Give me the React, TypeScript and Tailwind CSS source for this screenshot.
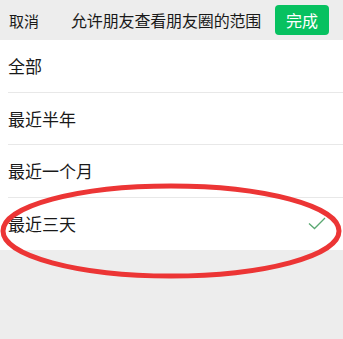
const options = ['全部', '最近半年', '最近一个月', '最近三天'];

export default function App() {
    const selected = 3;

    return (
        <div
            className="relative w-[343px] h-[339px] overflow-hidden bg-[#ededed] text-[#191919]"
            style={{ fontFamily: '"Noto Sans CJK SC", "Noto Sans", sans-serif' }}
        >
            <header className="h-[40px] flex items-center pl-[9px] pr-[14px] whitespace-nowrap">
                <span className="shrink-0 text-[15px] leading-none">取消</span>
                <h1 className="shrink-0 ml-[32px] text-[16px] font-normal leading-none tracking-[-0.15px]">
                    允许朋友查看朋友圈的范围
                </h1>
                <button className="shrink-0 ml-auto h-[30px] w-[54px] rounded-[4px] bg-[#07c160] text-white text-[16px] leading-none">
                    完成
                </button>
            </header>

            <ul className="bg-white">
                {options.map((label, i) => (
                    <li key={label} className="pl-[8px]">
                        <div
                            className={
                                'h-[52.5px] flex items-center pr-[17px] ' +
                                (i < options.length - 1 ? 'border-b border-[#e8e8e8]' : '')
                            }
                        >
                            <span className="text-[17px] leading-none">{label}</span>
                            {i === selected && (
                                <svg className="ml-auto" width="18" height="13" viewBox="0 0 18 13" fill="none">
                                    <path d="M1 6.5 L6.5 11.5 L17 1" stroke="#5aa872" strokeWidth="1.3" />
                                </svg>
                            )}
                        </div>
                    </li>
                ))}
            </ul>

            {/* hand-drawn red circle around the selected row */}
            <svg className="absolute left-0 top-0 pointer-events-none" width="343" height="339" viewBox="0 0 343 339">
                <ellipse cx="171" cy="231" rx="168" ry="45" fill="none" stroke="#ec3535" strokeWidth="5" />
            </svg>
        </div>
    );
}
